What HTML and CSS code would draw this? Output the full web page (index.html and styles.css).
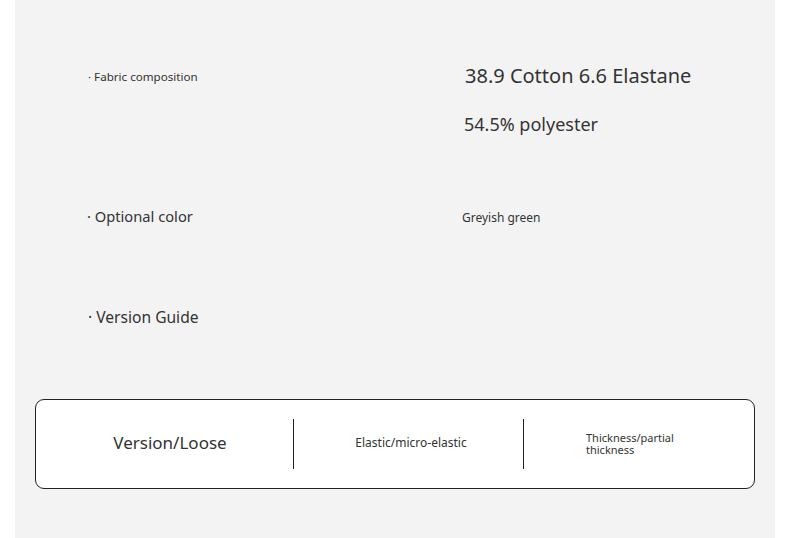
FILE: index.html
```html
<!DOCTYPE html>
<html lang="en">
<head>
<meta charset="utf-8">
<title>Product details</title>
<link rel="stylesheet" href="styles.css">
</head>
<body>
<div class="panel">
  <div class="row row-fabric">
    <div class="label label-small">· Fabric composition</div>
    <div class="values">
      <div class="value-big">38.9 Cotton 6.6 Elastane</div>
      <div class="value-mid">54.5% polyester</div>
    </div>
  </div>
  <div class="row row-color">
    <div class="label label-color">· Optional color</div>
    <div class="value-small">Greyish green</div>
  </div>
  <div class="row row-guide">
    <div class="label label-guide">· Version Guide</div>
  </div>
  <div class="guide-box">
    <div class="cell cell-fit">Version/Loose</div>
    <div class="divider"></div>
    <div class="cell cell-elastic">Elastic/micro-elastic</div>
    <div class="divider"></div>
    <div class="cell cell-thick"><span class="thick-text">Thickness/partial thickness</span></div>
  </div>
</div>
</body>
</html>
```
FILE: styles.css
```css
html, body {
  margin: 0;
  padding: 0;
  background: #ffffff;
}
body {
  font-family: "Noto Sans", "Open Sans", sans-serif;
  color: #333333;
}
.panel {
  margin: 0 15px;
  width: 760px;
  height: 538px;
  background: #f3f3f3;
  display: flex;
  flex-direction: column;
  overflow: hidden;
}
.row {
  display: grid;
  grid-template-columns: 377px auto;
  align-items: start;
  padding-left: 73px;
}
.row-fabric { margin-top: 64px; }
.row-color { margin-top: 68px; }
.row-guide { margin-top: 77px; }
.label {
  line-height: 24px;
  white-space: nowrap;
}
.label-small {
  font-size: 11.6px;
  margin-top: 1px;
}
.label-color {
  font-size: 14.7px;
  margin-left: -1px;
}
.label-guide {
  font-size: 15.6px;
}
.value-big {
  font-size: 20px;
  line-height: 24px;
  white-space: nowrap;
}
.value-mid {
  font-size: 18px;
  line-height: 24px;
  margin-top: 24px;
  margin-left: -1px;
  white-space: nowrap;
}
.value-small {
  font-size: 12px;
  line-height: 24px;
  margin-top: 2px;
  margin-bottom: -2px;
  margin-left: -3px;
}
.guide-box {
  margin: 70px 20px 0 20px;
  height: 90px;
  box-sizing: border-box;
  border: 1px solid #222222;
  border-radius: 9px;
  background: #ffffff;
  display: flex;
  align-items: center;
}
.divider {
  width: 1px;
  height: 50px;
  background: #222222;
  flex: none;
}
.cell {
  text-align: center;
}
.cell-fit {
  width: 257px;
  padding-left: 11px;
  padding-bottom: 3px;
  box-sizing: border-box;
  font-size: 17px;
}
.cell-elastic {
  width: 229px;
  padding-left: 5px;
  padding-bottom: 3px;
  box-sizing: border-box;
  font-size: 12px;
}
.cell-thick {
  flex: 1;
  text-align: left;
  padding-left: 62px;
  padding-bottom: 1px;
  font-size: 11px;
  line-height: 12px;
}
.thick-text {
  display: block;
  width: 92px;
}
```
